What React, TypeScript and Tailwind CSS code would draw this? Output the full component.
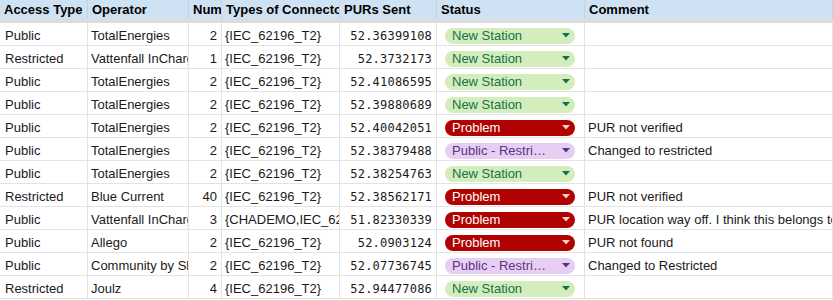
import React from "react";

type Status = "new" | "problem" | "restricted";

interface Row {
  access: string;
  operator: string;
  num: number;
  types: string;
  purs: string;
  status: Status;
  comment: string;
}

const ROWS: Row[] = [
  { access: "Public", operator: "TotalEnergies", num: 2, types: "{IEC_62196_T2}", purs: "52.36399108", status: "new", comment: "" },
  { access: "Restricted", operator: "Vattenfall InCharge", num: 1, types: "{IEC_62196_T2}", purs: "52.3732173", status: "new", comment: "" },
  { access: "Public", operator: "TotalEnergies", num: 2, types: "{IEC_62196_T2}", purs: "52.41086595", status: "new", comment: "" },
  { access: "Public", operator: "TotalEnergies", num: 2, types: "{IEC_62196_T2}", purs: "52.39880689", status: "new", comment: "" },
  { access: "Public", operator: "TotalEnergies", num: 2, types: "{IEC_62196_T2}", purs: "52.40042051", status: "problem", comment: "PUR not verified" },
  { access: "Public", operator: "TotalEnergies", num: 2, types: "{IEC_62196_T2}", purs: "52.38379488", status: "restricted", comment: "Changed to restricted" },
  { access: "Public", operator: "TotalEnergies", num: 2, types: "{IEC_62196_T2}", purs: "52.38254763", status: "new", comment: "" },
  { access: "Restricted", operator: "Blue Current", num: 40, types: "{IEC_62196_T2}", purs: "52.38562171", status: "problem", comment: "PUR not verified" },
  { access: "Public", operator: "Vattenfall InCharge", num: 3, types: "{CHADEMO,IEC_62196_T2_COMBO}", purs: "51.82330339", status: "problem", comment: "PUR location way off. I think this belongs to another station" },
  { access: "Public", operator: "Allego", num: 2, types: "{IEC_62196_T2}", purs: "52.0903124", status: "problem", comment: "PUR not found" },
  { access: "Public", operator: "Community by Shell Recharge", num: 2, types: "{IEC_62196_T2}", purs: "52.07736745", status: "restricted", comment: "Changed to Restricted" },
  { access: "Restricted", operator: "Joulz", num: 4, types: "{IEC_62196_T2}", purs: "52.94477086", status: "new", comment: "" },
];

const GRID = "grid grid-cols-[88px_101px_33px_118px_97px_148px_1fr]";

const CHIP: Record<Status, { label: string; box: string; arrow: string }> = {
  new: { label: "New Station", box: "bg-[#d4edbc] text-[#11734b]", arrow: "#11734b" },
  problem: { label: "Problem", box: "bg-[#b10202] text-white", arrow: "#ffcfc9" },
  restricted: { label: "Public - Restricted", box: "bg-[#e6cff2] text-[#5a3286]", arrow: "#5a3286" },
};

function Chip({ status }: { status: Status }) {
  const c = CHIP[status];
  return (
    <div className={`ml-[8px] w-[130px] h-[16px] rounded-full flex items-center pl-[7px] pr-[5px] ${c.box}`}>
      <span className="flex-1 truncate leading-[16px]">{c.label}</span>
      <svg width="8" height="5" viewBox="0 0 8 5" className="ml-[14px] shrink-0">
        <path d="M0 0h8L4 4.5z" fill={c.arrow} />
      </svg>
    </div>
  );
}

const cell = "border-r border-b border-[#e2e3e3] overflow-hidden whitespace-nowrap flex items-center pt-[3px]";

export default function App() {
  return (
    <div className="w-[833px] h-[300px] overflow-hidden bg-white text-[13px] text-[#1a1a1a]" style={{ fontFamily: "'Liberation Sans', Arial, sans-serif" }}>
      <div className={`${GRID} h-[19px] bg-[#cfe2f3] font-bold text-black`}>
        {["Access Type", "Operator", "Num", "Types of Connectors", "PURs Sent", "Status", "Comment"].map((h) => (
          <div key={h} className="border-r border-[#c4d3e0] overflow-hidden whitespace-nowrap flex items-center pl-[4px] pt-[1px]">
            {h}
          </div>
        ))}
      </div>
      <div className="h-[4px] bg-[#dadce0]" />
      {ROWS.map((r, i) => (
        <div key={i} className={`${GRID} h-[23px]`}>
          <div className={`${cell} pl-[5px]`}>{r.access}</div>
          <div className={`${cell} pl-[3px]`}>{r.operator}</div>
          <div className={`${cell} justify-end pr-[4px]`}>{r.num}</div>
          <div className={`${cell} pl-[3px]`}>{r.types}</div>
          <div className={`${cell} justify-end pr-[4px] text-[12px] tracking-[0.2px]`} style={{ fontFamily: "'DejaVu Sans Mono', 'Liberation Mono', monospace" }}>
            {r.purs}
          </div>
          <div className={cell}>
            <Chip status={r.status} />
          </div>
          <div className={`${cell} pl-[3px]`}>{r.comment}</div>
        </div>
      ))}
    </div>
  );
}
